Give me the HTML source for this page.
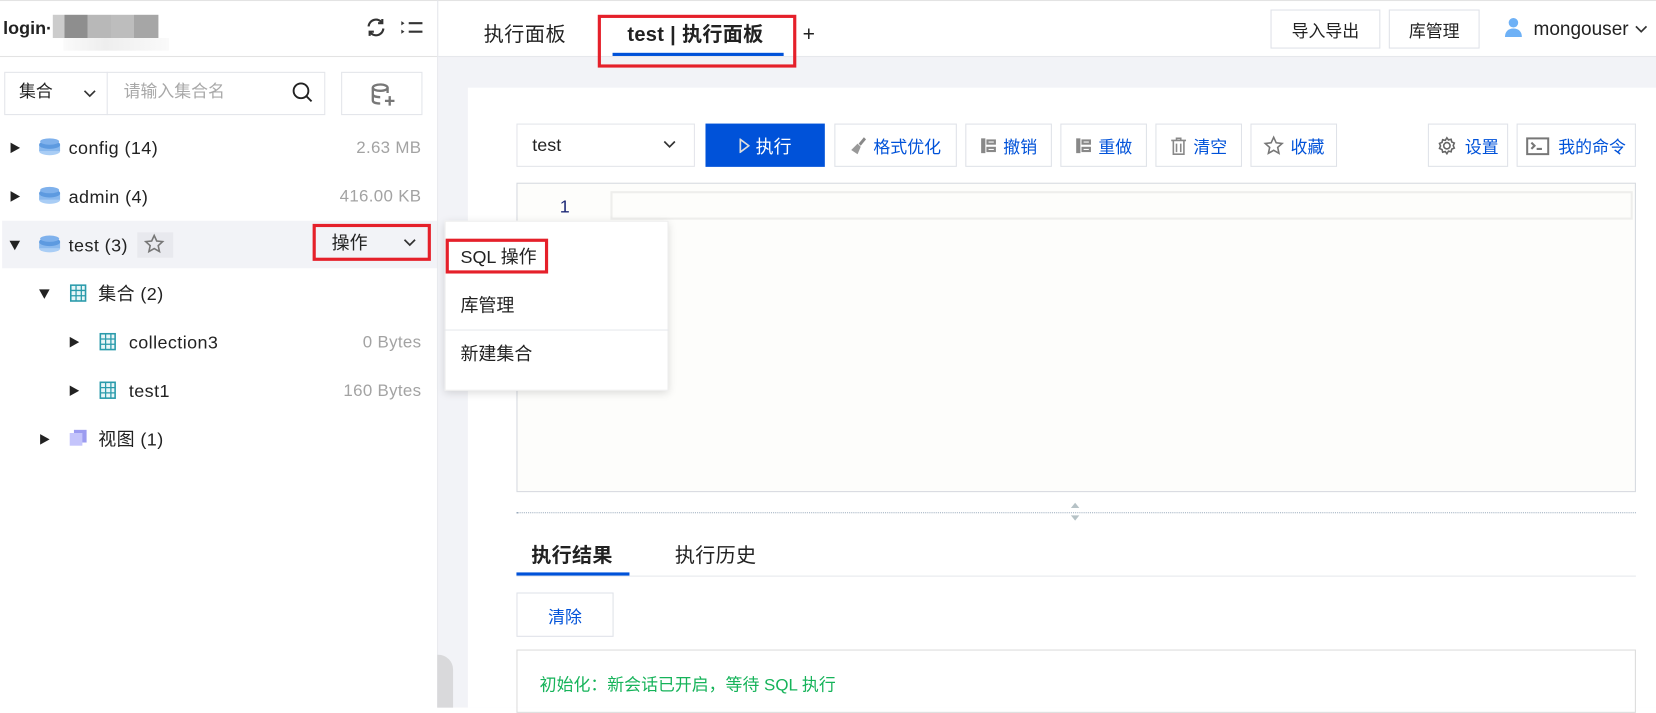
<!DOCTYPE html>
<html><head><meta charset="utf-8"><style>
*{box-sizing:border-box;margin:0;padding:0}
html,body{width:1656px;height:708px;overflow:hidden;background:#fff}
#root{position:absolute;left:0;top:0;width:1568px;height:670px;transform:scale(1.05612);transform-origin:0 0;font-family:"Liberation Sans","Noto Sans CJK SC",sans-serif;color:#222;background:#fff}
.a{position:absolute}
.t{position:absolute;white-space:nowrap;line-height:1}
.tr{font-size:17px;letter-spacing:.4px}
.btn{position:absolute;border:1px solid #dfe2e8;background:#fff;display:flex;align-items:center;justify-content:center;font-size:16px;color:#0052d9;gap:6px;padding-top:1px}
.size{position:absolute;left:0;width:399px;text-align:right;font-size:16px;color:#a3a3a3;white-space:nowrap;line-height:1;letter-spacing:.3px}
.tri{position:absolute;width:0;height:0;border-top:5px solid transparent;border-bottom:5px solid transparent;border-left:9px solid #222}
.trid{position:absolute;width:0;height:0;border-left:5px solid transparent;border-right:5px solid transparent;border-top:9px solid #222}
</style></head><body><div id="root">
<div class="a" style="left:0;top:0;width:1568px;height:1px;background:#e3e3e3"></div>
<div class="a" style="left:414px;top:0;width:1px;height:670px;background:#e3e5ea"></div>
<div class="t" style="left:3px;top:18px;font-size:17px;font-weight:bold">login·</div>
<div class="a" style="left:50px;top:14px;width:100px;height:22px;background:linear-gradient(90deg,#ccc 0 11%,#8e8e8e 11% 33%,#b8b8b8 33% 55%,#bdbdbd 55% 77%,#a6a6a6 77% 100%)"></div>
<div class="a" style="left:60px;top:36px;width:100px;height:12px;background:linear-gradient(90deg,#fafafa,#eee 40%,#fafafa)"></div>
<svg class="a" style="left:345px;top:15px" width="22" height="22" viewBox="0 0 22 22" fill="none" stroke="#333" stroke-width="2"><path d="M4 10a7 7 0 0 1 13-3M18 12a7 7 0 0 1-13 3"/><path d="M17 3v4h-4M5 19v-4h4"/></svg>
<svg class="a" style="left:378px;top:17px" width="24" height="18" viewBox="0 0 24 18"><path d="M2 3l3 2-3 2zM2 11l3 2-3 2z" fill="#333"/><path d="M9 5h13M9 13h13" stroke="#333" stroke-width="2"/></svg>
<div class="a" style="left:0;top:53px;width:414px;height:1px;background:#e3e3e3"></div>
<div class="a" style="left:4px;top:68px;width:304px;height:41px;border:1px solid #e3e5ea"></div>
<div class="a" style="left:101px;top:68px;width:1px;height:41px;background:#e3e5ea"></div>
<div class="t" style="left:18px;top:80px;font-size:16px">集合</div>
<svg class="a" style="left:79px;top:85px" width="12" height="8"><path d="M1 1l5 5 5-5" stroke="#333" stroke-width="1.6" fill="none"/></svg>
<div class="t" style="left:117px;top:80px;font-size:16px;color:#a8a8a8">请输入集合名</div>
<svg class="a" style="left:276px;top:77px" width="22" height="22" fill="none" stroke="#222" stroke-width="1.8"><circle cx="9" cy="9" r="7"/><path d="M14 14l5 5"/></svg>
<div class="a" style="left:323px;top:68px;width:77px;height:41px;border:1px solid #e3e5ea"></div>
<svg class="a" style="left:350px;top:78px" width="26" height="24" fill="none" stroke="#777" stroke-width="2.2"><ellipse cx="10" cy="5" rx="7" ry="3"/><path d="M3 5v12c0 2 3 3 7 3M17 5v5M3 11c0 2 3 3 7 3"/><path d="M19 13v9M14.5 17.5h9"/></svg>
<div class="a" style="left:2px;top:209px;width:412px;height:45px;background:#f2f3f7"></div>
<div class="tri" style="left:10px;top:135px"></div>
<div class="tri" style="left:10px;top:181px"></div>
<div class="trid" style="left:9px;top:228px"></div>
<div class="trid" style="left:37px;top:274px"></div>
<div class="tri" style="left:66px;top:319px"></div>
<div class="tri" style="left:66px;top:365px"></div>
<div class="tri" style="left:38px;top:411px"></div>
<svg width="0" height="0" style="position:absolute"><defs><g id="db"><ellipse cx="10" cy="13" rx="10" ry="4" fill="#a9cdf5"/><rect x="0" y="7" width="20" height="6" fill="#8ab9ee"/><ellipse cx="10" cy="7" rx="10" ry="4" fill="#5d9ae0"/><ellipse cx="10" cy="4" rx="9" ry="3" fill="#7fb1ec"/></g>
<g id="tb"><rect x="1" y="1" width="14" height="15" fill="#e8f6f8" stroke="#2a9bab" stroke-width="1.5"/><path d="M1 6h14M1 11h14M6 1v15M11 1v15" stroke="#2a9bab" stroke-width="1.2"/></g></defs></svg>
<svg class="a" style="left:37px;top:130px" width="20" height="18"><use href="#db"/></svg>
<svg class="a" style="left:37px;top:176px" width="20" height="18"><use href="#db"/></svg>
<svg class="a" style="left:37px;top:222px" width="20" height="18"><use href="#db"/></svg>
<div class="t tr" style="left:65px;top:132px">config (14)</div>
<div class="size" style="top:133px">2.63 MB</div>
<div class="t tr" style="left:65px;top:178px">admin (4)</div>
<div class="size" style="top:179px">416.00 KB</div>
<div class="t tr" style="left:65px;top:224px">test (3)</div>
<div class="a" style="left:130px;top:220px;width:34px;height:24px;background:#e8e9ee"></div>
<svg class="a" style="left:136px;top:221px" width="20" height="20"><path d="M10 2l2.4 5.2 5.6.6-4.2 3.8 1.2 5.6-5-2.9-5 2.9 1.2-5.6-4.2-3.8 5.6-.6z" fill="none" stroke="#777" stroke-width="1.5"/></svg>
<div class="a" style="left:296px;top:212px;width:112px;height:35px;border:3px solid #e5202a"></div>
<div class="t" style="left:314px;top:222px;font-size:17px">操作</div>
<svg class="a" style="left:382px;top:226px" width="12" height="8"><path d="M1 1l5 5 5-5" stroke="#333" stroke-width="1.6" fill="none"/></svg>
<svg class="a" style="left:66px;top:269px" width="18" height="18"><use href="#tb"/></svg>
<div class="t tr" style="left:93px;top:270px">集合 (2)</div>
<svg class="a" style="left:94px;top:315px" width="18" height="18"><use href="#tb"/></svg>
<div class="t tr" style="left:122px;top:316px">collection3</div>
<div class="size" style="top:317px">0 Bytes</div>
<svg class="a" style="left:94px;top:361px" width="18" height="18"><use href="#tb"/></svg>
<div class="t tr" style="left:122px;top:362px">test1</div>
<div class="size" style="top:363px">160 Bytes</div>
<div class="a" style="left:70px;top:407px;width:12px;height:12px;background:#9c9cf0"></div>
<div class="a" style="left:66px;top:410px;width:12px;height:12px;background:#c4c4fb"></div>
<div class="t tr" style="left:93px;top:408px">视图 (1)</div>
<div class="a" style="left:415px;top:54px;width:1153px;height:616px;background:#f2f3f7"></div>
<div class="a" style="left:415px;top:53px;width:1153px;height:1px;background:#e6e8ec"></div>
<div class="a" style="left:414px;top:620px;width:15px;height:50px;background:#d9d9db;border-top-right-radius:14px"></div>
<div class="t" style="left:458px;top:24px;font-size:19px;letter-spacing:.5px">执行面板</div>
<div class="t" style="left:594px;top:24px;font-size:19px;font-weight:bold;letter-spacing:.3px">test | 执行面板</div>
<div class="a" style="left:580px;top:50px;width:162px;height:3px;background:#0052d9"></div>
<div class="a" style="left:566px;top:14px;width:188px;height:50px;border:3px solid #e5202a"></div>
<div class="t" style="left:760px;top:23px;font-size:20px">+</div>
<div class="btn" style="left:1203px;top:9px;width:104px;height:37px;color:#222">导入导出</div>
<div class="btn" style="left:1315px;top:9px;width:86px;height:37px;color:#222">库管理</div>
<svg class="a" style="left:1424px;top:16px" width="18" height="20"><circle cx="9" cy="5.5" r="4.5" fill="#6eb1f6"/><path d="M1 19c0-5 3-8 8-8s8 3 8 8z" fill="#6eb1f6"/></svg>
<div class="t" style="left:1452px;top:18px;font-size:18px">mongouser</div>
<svg class="a" style="left:1548px;top:24px" width="12" height="8"><path d="M1 1l5 5 5-5" stroke="#333" stroke-width="1.6" fill="none"/></svg>
<div class="a" style="left:443px;top:83px;width:1125px;height:587px;background:#fff"></div>
<div class="a" style="left:489px;top:117px;width:169px;height:41px;border:1px solid #e3e5ea"></div>
<div class="t" style="left:504px;top:129px;font-size:17px">test</div>
<svg class="a" style="left:628px;top:133px" width="12" height="8"><path d="M1 1l5 5 5-5" stroke="#333" stroke-width="1.6" fill="none"/></svg>
<div class="a" style="left:668px;top:117px;width:113px;height:41px;background:#0052d9;display:flex;align-items:center;justify-content:center;gap:6px;color:#fff;font-size:17px"><svg width="10" height="14"><path d="M1 1l8 6-8 6z" fill="none" stroke="#ddd" stroke-width="1.6"/></svg>执行</div>
<div class="btn" style="left:790px;top:117px;width:116px;height:41px"><svg width="16" height="18"><path d="M13 1l2 2-5 6-2-2z" fill="#888"/><path d="M7 7l3 3-3 7-6-4z" fill="#999"/></svg>格式优化</div>
<div class="btn" style="left:914px;top:117px;width:82px;height:41px"><svg width="16" height="16" fill="#888"><rect x="1" y="1" width="4" height="14"/><rect x="6" y="2" width="9" height="5"/><rect x="6" y="9" width="9" height="5"/><rect x="8" y="4" width="5" height="1" fill="#fff"/><rect x="8" y="11" width="5" height="1" fill="#fff"/></svg>撤销</div>
<div class="btn" style="left:1004px;top:117px;width:82px;height:41px"><svg width="16" height="16" fill="#888"><rect x="1" y="1" width="4" height="14"/><rect x="6" y="2" width="9" height="5"/><rect x="6" y="9" width="9" height="5"/><rect x="8" y="4" width="5" height="1" fill="#fff"/><rect x="8" y="11" width="5" height="1" fill="#fff"/></svg>重做</div>
<div class="btn" style="left:1094px;top:117px;width:82px;height:41px"><svg width="16" height="17" fill="none" stroke="#888" stroke-width="1.5"><path d="M1 3h14M3 3v13h10V3M6 6v8M10 6v8M6 3V1h4v2"/></svg>清空</div>
<div class="btn" style="left:1184px;top:117px;width:82px;height:41px"><svg width="20" height="20"><path d="M10 2l2.4 5.2 5.6.6-4.2 3.8 1.2 5.6-5-2.9-5 2.9 1.2-5.6-4.2-3.8 5.6-.6z" fill="none" stroke="#777" stroke-width="1.5"/></svg>收藏</div>
<div class="btn" style="left:1352px;top:117px;width:76px;height:41px;gap:8px"><svg width="18" height="18" fill="none" stroke="#666" stroke-width="1.5"><circle cx="9" cy="9" r="3"/><path d="M9 1.5l1.5 2 2.5-.6.6 2.5 2.4 1-1 2.4 1 2.4-2.4 1-.6 2.5-2.5-.6L9 16.5l-1.5-2-2.5.6-.6-2.5-2.4-1 1-2.4-1-2.4 2.4-1 .6-2.5 2.5.6z"/></svg>设置</div>
<div class="btn" style="left:1436px;top:117px;width:113px;height:41px;gap:8px"><svg width="22" height="17" fill="none" stroke="#777" stroke-width="2"><rect x="1" y="1" width="20" height="15"/><path d="M5 5l3 3-3 3M10 11h5"/></svg>我的命令</div>
<div class="a" style="left:489px;top:173px;width:1060px;height:293px;border:1px solid #d6d9df;background:#fdfdfb"></div>
<div class="t" style="left:530px;top:187px;font-size:17px;color:#1e2a78">1</div>
<div class="a" style="left:578px;top:181px;width:968px;height:27px;border:2px solid #eeeeec;background:#fdfdfb"></div>
<div class="a" style="left:489px;top:485px;width:1060px;height:0;border-top:1px dotted #9ab"></div>
<svg class="a" style="left:1012px;top:473px" width="12" height="24"><path d="M2 8l4-5 4 5z M2 15l4 5 4-5z" fill="#b6c2c6"/></svg>
<div class="t" style="left:503px;top:517px;font-size:19px;font-weight:bold;letter-spacing:.3px">执行结果</div>
<div class="t" style="left:639px;top:517px;font-size:19px;letter-spacing:.3px">执行历史</div>
<div class="a" style="left:489px;top:545px;width:1060px;height:1px;background:#e6e8ec"></div>
<div class="a" style="left:489px;top:542px;width:107px;height:3px;background:#0052d9"></div>
<div class="btn" style="left:489px;top:561px;width:92px;height:42px">清除</div>
<div class="a" style="left:489px;top:615px;width:1060px;height:60px;border:1px solid #dcdcdc"></div>
<div class="t" style="left:511px;top:642px;font-size:16px;color:#16b35a">初始化：新会话已开启，等待 SQL 执行</div>
<div class="a" style="left:421px;top:209px;width:212px;height:161px;background:#fff;box-shadow:0 2px 8px rgba(0,0,0,.15);border:1px solid #eee"></div>
<div class="t" style="left:436px;top:235px;font-size:17px">SQL 操作</div>
<div class="a" style="left:422px;top:226px;width:97px;height:33px;border:3px solid #e5202a"></div>
<div class="t" style="left:436px;top:281px;font-size:17px">库管理</div>
<div class="a" style="left:421px;top:312px;width:212px;height:1px;background:#e6e8ec"></div>
<div class="t" style="left:436px;top:327px;font-size:17px">新建集合</div>
</div></body></html>
